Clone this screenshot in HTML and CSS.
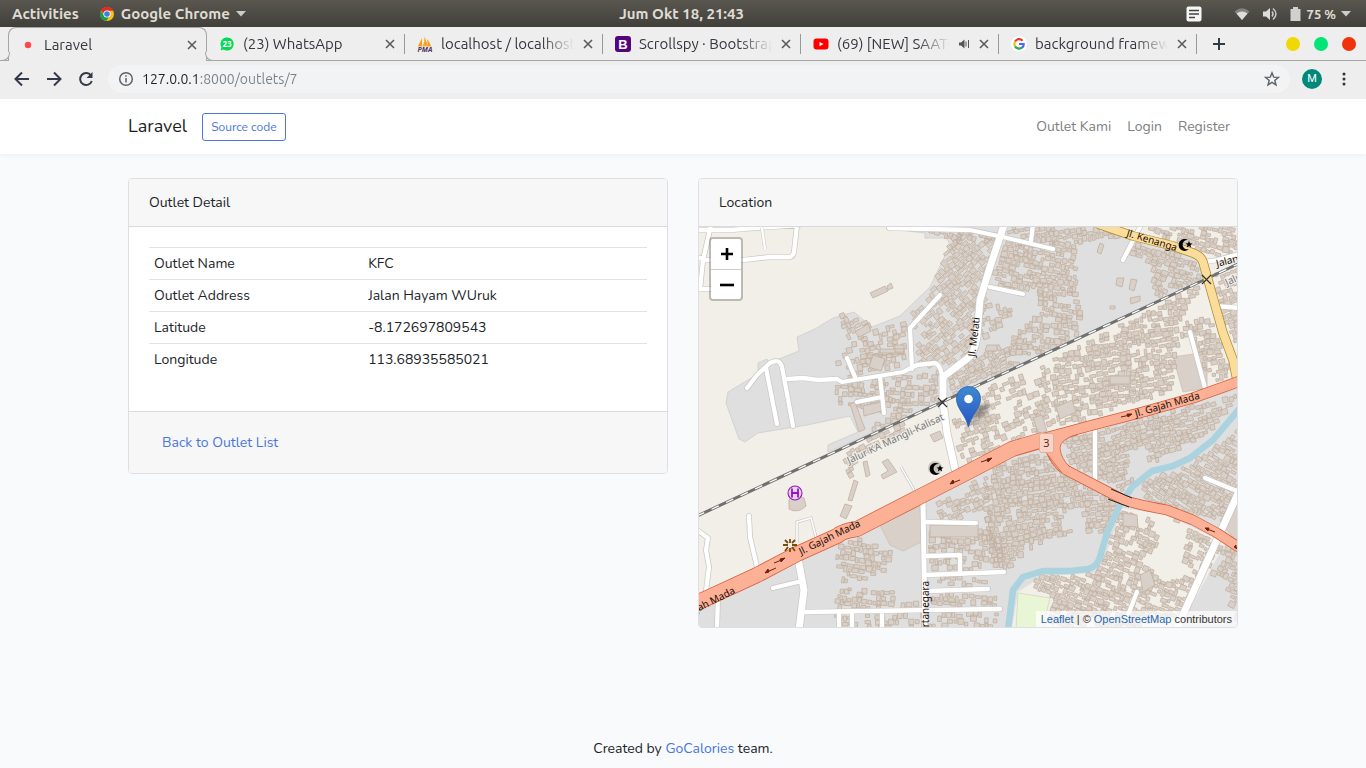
FILE: index.html
```html
<!DOCTYPE html>
<html lang="id">
<head>
<meta charset="utf-8">
<title>Laravel</title>
<meta name="viewport" content="width=device-width, initial-scale=1">
<link rel="stylesheet" href="styles.css">
</head>
<body>
<header class="topbar">
  <div class="topbar-side">
    <button class="top-item">Activities</button>
    <button class="top-item">
      <svg width="16" height="16" viewBox="0 0 16 16"><circle cx="8" cy="8" r="7" fill="#fbc116"/><path d="M8 8 2 4.400A7 7 0 0 1 14.100 4.500H8Z" fill="#de2c20"/><path d="M1.900 4.500A7 7 0 0 0 7.300 15L10.500 10 8 8 5 9.500Z" fill="#1a9b52"/><path d="M1.900 4.500A7 7 0 0 1 14.100 4.500H8L5 8Z" fill="#de2c20"/><circle cx="8" cy="8" r="3.600" fill="#fff"/><circle cx="8" cy="8" r="2.800" fill="#3d7eea"/></svg>
      Google Chrome
      <svg width="10" height="6" viewBox="0 0 10 6"><path d="M0 0h10L5 5.500z" fill="#ccc"/></svg>
    </button>
  </div>
  <button class="top-item">Jum Okt 18, 21:43</button>
  <div class="topbar-side topbar-end">
    <svg width="16" height="16" viewBox="0 0 16 16"><rect x=".5" y=".5" width="15" height="15" rx="2" fill="#f6f6f6"/><path d="M3 4.500h10M3 8h10M3 11.500h6" stroke="#45443f" stroke-width="1.500"/></svg>
    <svg class="wifi" width="16" height="14" viewBox="0 0 16 14"><path d="M8 13 .5 4.500Q8-2 15.500 4.500Z" fill="#85837e"/><path d="M8 13 2.500 6.600Q8 2.500 13.500 6.600Z" fill="#ddd"/></svg>
    <svg width="16" height="16" viewBox="0 0 16 16"><path d="M1 5.500h3L8 2v12l-4-3.500H1z" fill="#ddd"/><path d="M10 5.500q2 2.500 0 5M11 2.500q6 5.500 0 11" fill="none" stroke="#ccc" stroke-width="1.500"/></svg>
    <svg class="battery" width="11" height="16" viewBox="0 0 11 16"><path d="M3 1h5v2h2.500v12H.5V3H3z" fill="#d0d0ce"/></svg>
    <button class="top-item power">75 % <svg width="10" height="6" viewBox="0 0 10 6"><path d="M0 0h10L5 5.500z" fill="#ccc"/></svg></button>
  </div>
</header>

<nav class="tabs" aria-label="Tabs">
  <div class="tab tab-active">
    <svg width="16" height="16" viewBox="0 0 16 16"><circle cx="8" cy="8" r="3.200" fill="#ff4747"/></svg>
    <span class="tab-title">Laravel</span>
    <button class="tab-close" aria-label="Close"><svg width="10" height="10" viewBox="0 0 10 10"><path d="m1 1 8 8M9 1 1 9"/></svg></button>
  </div>
  <div class="tab">
    <svg width="16" height="16" viewBox="0 0 16 16"><path d="M8 1a7 7 0 1 1-3.500 13L1 15l1-3.500A7 7 0 0 1 8 1Z" fill="#06d755" stroke="#fff" stroke-width=".7"/><text x="8" y="11" text-anchor="middle" class="badge">23</text></svg>
    <span class="tab-title">(23) WhatsApp</span>
    <button class="tab-close" aria-label="Close"><svg width="10" height="10" viewBox="0 0 10 10"><path d="m1 1 8 8M9 1 1 9"/></svg></button>
  </div>
  <div class="tab">
    <svg width="16" height="16" viewBox="0 0 16 16"><path d="M1 10 5 2v8zM5.500 10.500Q8 6 7.500.5L11 10zM10 3q3 3 4 7h-3z" fill="#f8a01c"/><path d="M1 11q7-2 14 0" stroke="#fac772" fill="none"/><text x="8" y="16" text-anchor="middle" class="pma">PMA</text></svg>
    <span class="tab-title">localhost / localhost</span>
    <button class="tab-close" aria-label="Close"><svg width="10" height="10" viewBox="0 0 10 10"><path d="m1 1 8 8M9 1 1 9"/></svg></button>
  </div>
  <div class="tab">
    <svg width="16" height="16" viewBox="0 0 16 16"><rect width="16" height="16" rx="3" fill="#54057e"/><text x="8" y="12.500" text-anchor="middle" class="boot">B</text></svg>
    <span class="tab-title">Scrollspy · Bootstrap</span>
    <button class="tab-close" aria-label="Close"><svg width="10" height="10" viewBox="0 0 10 10"><path d="m1 1 8 8M9 1 1 9"/></svg></button>
  </div>
  <div class="tab">
    <svg width="16" height="16" viewBox="0 0 16 16"><rect x=".5" y="2.500" width="15" height="11" rx="3" fill="#f00"/><path d="m6.500 6 4 2-4 2.200z" fill="#fff"/></svg>
    <span class="tab-title">(69) [NEW] SAAT-</span>
    <svg width="12" height="12" viewBox="0 0 12 12"><path d="M1 4.500h2L6.500 1.500v9L3 7.500H1z" fill="#555"/><path d="M8 3.500v5M10.500 2v8" stroke="#555" fill="none"/></svg>
    <button class="tab-close" aria-label="Close"><svg width="10" height="10" viewBox="0 0 10 10"><path d="m1 1 8 8M9 1 1 9"/></svg></button>
  </div>
  <div class="tab">
    <svg width="16" height="16" viewBox="0 0 16 16"><circle cx="8" cy="8" r="8" fill="#fff"/><g fill="none" stroke-width="2.200"><path d="M4 5.500A4.700 4.700 0 0 1 11.500 4.700" stroke="#e33b2e"/><path d="M4 5.500Q2.700 8 4 10.500" stroke="#f9bb0a"/><path d="M4 10.500Q7 14 11 11.500" stroke="#2da94f"/><path d="M8 8h4.700Q12.800 10.500 11 11.700" stroke="#4a6cf0"/></g></svg>
    <span class="tab-title">background framew</span>
    <button class="tab-close" aria-label="Close"><svg width="10" height="10" viewBox="0 0 10 10"><path d="m1 1 8 8M9 1 1 9"/></svg></button>
  </div>
  <button class="new-tab" aria-label="New tab"><svg width="12" height="12" viewBox="0 0 12 12"><path d="M6 0v12M0 6h12" stroke="#333a48" stroke-width="2"/></svg></button>
  <div class="window-buttons">
    <button class="dot dot-min" aria-label="Minimize"></button>
    <button class="dot dot-max" aria-label="Maximize"></button>
    <button class="dot dot-close" aria-label="Close window"></button>
  </div>
</nav>

<div class="toolbar">
  <button class="tool" aria-label="Back"><svg width="16" height="16" viewBox="0 0 16 16"><path d="M15 8H2M8 1.500 1.500 8 8 14.500"/></svg></button>
  <button class="tool" aria-label="Forward"><svg width="16" height="16" viewBox="0 0 16 16"><path d="M1 8h13M8 1.500 14.500 8 8 14.500"/></svg></button>
  <button class="tool" aria-label="Reload"><svg width="16" height="16" viewBox="0 0 16 16"><path d="M13 4.500A6 6 0 1 0 13.800 10"/><path d="M14.500 1v6h-6z" fill="#333a48" stroke="none"/></svg></button>
  <div class="omnibox">
    <svg width="16" height="16" viewBox="0 0 16 16" fill="none" stroke="#5f6368" stroke-width="1.500"><circle cx="8" cy="8" r="6.300"/><path d="M8 7v4.500M8 4.200v1.600"/></svg>
    <input class="url" type="text" value="127.0.0.1:8000/outlets/7" aria-label="Address">
    <button class="star" aria-label="Bookmark"><svg width="16" height="16" viewBox="0 0 16 16"><path d="m8 1.800 1.700 4.300 4.700.3-3.600 3 1.200 4.500L8 11.400 4 13.900l1.200-4.500-3.600-3 4.700-.3z" fill="none" stroke="#5f6368" stroke-width="1.400"/></svg></button>
  </div>
  <button class="avatar" aria-label="Profile">M</button>
  <button class="more" aria-label="Menu"><svg width="4" height="14" viewBox="0 0 4 14" fill="#333"><circle cx="2" cy="2" r="1.500"/><circle cx="2" cy="7" r="1.500"/><circle cx="2" cy="12" r="1.500"/></svg></button>
</div>

<div class="page">
  <nav class="navbar">
    <div class="container navbar-row">
      <a class="brand" href="#">Laravel</a>
      <a class="source" href="#">Source code</a>
      <div class="nav-links">
        <a href="#">Outlet Kami</a>
        <a href="#">Login</a>
        <a href="#">Register</a>
      </div>
    </div>
  </nav>

  <main class="container cards">
    <section class="card">
      <h2 class="card-header">Outlet Detail</h2>
      <div class="card-body">
        <table class="details">
          <tbody>
            <tr><th scope="row">Outlet Name</th><td>KFC</td></tr>
            <tr><th scope="row">Outlet Address</th><td>Jalan Hayam WUruk</td></tr>
            <tr><th scope="row">Latitude</th><td>-8.172697809543</td></tr>
            <tr><th scope="row">Longitude</th><td>113.68935585021</td></tr>
          </tbody>
        </table>
      </div>
      <div class="card-footer"><a href="#">Back to Outlet List</a></div>
    </section>

    <section class="card">
      <h2 class="card-header">Location</h2>
      <div class="map">
        <svg class="map-canvas" viewBox="699 227 538 400" preserveAspectRatio="xMidYMid slice" role="img" aria-label="Map">
          <rect x="600" y="200" width="740" height="460" fill="#f2efe9"/>
          <g fill="#dfdfdf" stroke="#cfcdca" stroke-width=".8">
            <path d="M728 392 758 374V363L767 359 769 363 799 351 797 337 815 329 833 318 854 312 872 327 900 316 930 287 950 245 947 238H925V233L890 229V220H1100L1197 255 1206 279 942 402 828 452V445L858 432 850 416 807 425 758 433 745 442 739 439 726 403Z"/>
            <path d="M690 612 797 560 923 503 1010 456 1049 445 1240 388V640H690Z"/>
          </g>
          <path d="M1122 508 1167 515 1225 543 1180 627H1012L1018 592 1042 576 1094 573 1106 555ZM1000 627" fill="#f2efe9"/>
          <path d="M1018 593 1050 598 1042 630H1016Z" fill="#e9f6d5" stroke="#d5dfc4"/>
          <path d="M880 525 920 506 921 542 903 551 890 545ZM1173 357 1207 352 1207 388 1183 392ZM1225 527 1240 496V546Z" fill="#d9d0c9" stroke="#cdbfae" stroke-width=".8"/>
          <path id="buildings" class="buildings"/>
          <path class="buildings" d="m870 293 15-7 3 5-15 7zM887 286l4-3 2 5-5 2zM789 500q1-4 4-2 8-2 11 0l2 8q-8 8-17 3zM855 332l13-8 3 7-12 6zM873 355l12 4-4 12-12-4zM866 355l38-1M880 349h24v4h-24zM850 404l5-2 10 27-6 3zM863 406l18-4 1 9-18 5zM882 462l6-3 9 13-14 7-2-4 7-4zM863 462l4-1 3 14-4 2zM854 480l4 2-6 19-4-1zM845 504l7 2-6 13-6-3zM930 525h48v12h-48zM895 345h9v7h-9zM1117 278h7l-2 9-6-2zM1131 279l6 1-3 11-5-2zM1130 298l10-2v5l-9 3zM1097 252l3-9 4 2-3 9zM1110 306h5v3h-5zM930 435l10-4 3 7-9 4zM1056 407l16-7 4 12-16 7zM1123 513l14 2 1 12-15-1zM1140 575l10-5 5 15-12 7zM1110 376h20v8h-20zM1033 418l9-3 5 16-8 3zM987 345h10v6h-12z"/>
          <path d="M1240 408 1213 440 1190 458 1173 466 1152 471 1132 487 1120 505 1107 533 1100 557Q1097 567 1088 569L1070 571 1043 571 1023 577 1013 590 1008 630" fill="none" stroke="#aad3df" stroke-width="6.500" stroke-linejoin="round"/>
          <g id="local-casing" class="local casing"></g>
          <g id="local-roads" class="local">
            <g stroke-width="4.300">
              <path d="M697 230 730 230 770 227 799 225M711 225 703 260 700 289M697 257 705 260 743 260 770 257H789Q793 257 794 252L797 225M697 289H715"/>
              <path d="M889 228 970 230 1003 237 1053 249M1033 225 1031 241M990 287 1023 294M1141 225 1123 260M940 295 910 328 912 369"/>
              <path d="M747 388 757 375 770 363Q780 358 782 367L793 426M766 368 777 424M787 379 803 378 818 380 837 379 842 382 903 372 917 365 935 363Q942 366 942 380M847 358 855 377M880 377 884 413M857 402 882 397"/>
              <path d="M1190 332 1205 388M1204 262 1217 260 1240 254M1216 306 1240 308M749 516 750 537 757 567M697 530 708 538 706 550 709 567 706 591M718 596 717 630M773 588 802 581"/>
              <path d="M925 522 976 523M927 556 960 555V572M925 575 1004 572M927 591 988 589M803 612 1000 609M839 613V630M852 613V630M882 613V630M1095 428V484M1205 478 1237 491M1137 592 1126 620"/>
            </g>
            <path d="M923 501 925 630" stroke-width="5"/>
            <path d="M1004 225 990 267 980 300 977 337Q974 354 968 358L943 377V402L947 433 955 469M798 558 804 590 799 630M1240 489 1176 630" stroke-width="7"/>
          </g>
          <path d="M762 228 765 249" stroke="#ccc" stroke-width="3.600"/>
          <path d="M762 228 765 249" stroke="#fff" stroke-width="2.400"/>
          <path d="M797 543V522L811 518 816 537M901 467 914 490" fill="none" stroke="#ccc" stroke-width="3"/>
          <path d="M797 543V522L811 518 816 537M901 467 914 490" fill="none" stroke="#fff" stroke-width="1.500"/>
          <path d="M697 516 942 402 1206 279 1240 263" fill="none" stroke="#707070" stroke-width="3"/>
          <path d="M697 516 942 402 1206 279 1240 263" fill="none" stroke="#fff" stroke-width="1.300" stroke-dasharray="8 8"/>
          <g fill="none" stroke-linejoin="round">
            <path d="M1098 224 1133 236 1173 246 1193 253Q1201 256 1203 262L1210 287 1223 333 1233 360 1238 385" stroke="#aa8d2c" stroke-width="9.500"/>
            <path d="M1098 224 1133 236 1173 246 1193 253Q1201 256 1203 262L1210 287 1223 333 1233 360 1238 385" stroke="#fbdc9b" stroke-width="8"/>
            <g stroke="#d55c39">
              <path d="M690 606 757 575 797 554 837 536Q842 531 857 529L923 495 970 471 1012 449 1043 440" stroke-width="16"/>
              <path d="M1030 442 1093 425 1143 412 1193 398 1240 381" stroke-width="11"/>
              <path d="M1049 438Q1050 459 1066 470L1093 484 1120 498Q1128 503 1167 510L1193 520 1217 533 1240 548" stroke-width="10.500"/>
            </g>
            <g stroke="#fcb197">
              <path d="M690 606 757 575 797 554 837 536Q842 531 857 529L923 495 970 471 1012 449 1045 439" stroke-width="14.500"/>
              <path d="M1030 442 1093 425 1143 412 1193 398 1240 381" stroke-width="9.500"/>
              <path d="M1049 436Q1050 459 1066 470L1093 484 1120 498Q1128 503 1167 510L1193 520 1217 533 1240 548" stroke-width="9"/>
            </g>
            <path d="M1040 440 1060 432 1078 433.500Q1060 439 1060 448 1061 458 1069 467L1063 473 1043 449Z" fill="#fcb197"/>
            <path d="M1078 434.500Q1060 439 1060 448 1061 459 1070 467M1044 450 1062 473" stroke="#d55c39" stroke-width=".8"/>
            <path d="m1111 489 21 9M1108 499l21 8" stroke="#222" stroke-width="1"/>
          </g>
          <path d="m938 398 9 9m0-9-9 9M1202 275l9 9m0-9-9 9" stroke="#333" stroke-width="1.200"/>
          <g fill="#6c2210" stroke="#6c2210" stroke-width="1">
            <path d="m774 563 10-4m-3 3-1-3 5-1zM776 568l-9 4m1-3 1 3-4 1zM981 462l9-3m-2 3-1-3 5-1zM960 480l-8 3m1-3 1 3-4 1zM1121 417l9-2m-2 2-1-3 5 0zM1215 532l-8-3m2-1-1 3-3-3zM1237 548l-3-1 2-2v4z"/>
          </g>
          <rect x="1039.500" y="433.500" width="14" height="19" rx="2" fill="#f6d5c8" stroke="#e5ac99"/>
          <text x="1046.500" y="447" text-anchor="middle" class="shield">3</text>
          <g class="road-label">
            <text transform="translate(801 555) rotate(-26)">Jl. Gajah Mada</text>
            <text transform="translate(1136 417) rotate(-16)">Jl. Gajah Mada</text>
            <text transform="translate(692 615) rotate(-27)">ajah Mada</text>
            <text transform="translate(975 357) rotate(-83)">Jl. Melati</text>
            <text transform="translate(1126 236) rotate(17)">Jl. Kenanga</text>
            <text transform="translate(929 633) rotate(-90)">ertanegara</text>
            <text transform="translate(1217 267) rotate(-14)">Jalan</text>
            <text class="rail-label" transform="translate(849 464) rotate(-25)">Jalur KA Mangli-Kalisat</text>
            <text class="rail-label" transform="translate(1227 286) rotate(-25)">Jalur</text>
          </g>
          <circle cx="935" cy="468" r="7" fill="#c9c5bd"/>
          <g id="mosque"><path d="M940 473a6 6 0 1 1-1-9 4.700 4.700 0 1 0 1 9z"/><path d="m940 465 1 2.300 2.500.2-2 1.500.7 2.500-2.200-1.400-2.200 1.400.7-2.500-2-1.500 2.500-.2z"/></g>
          <use href="#mosque" x="249" y="-224"/>
          <g fill="none" stroke="#9a12c4"><circle cx="795" cy="493" r="7" stroke-width="1.100" fill="#e5d6e3"/><path d="M792 488.500v9M798 488.500v9M792 493h6" stroke-width="1.800"/></g>
          <path d="M790 539v4M790 548v4M783 545h5M792 545h5M785 540l3 3M795 540l-3 3M785 551l3-4M795 551l-3-4" stroke="#7a4d0a" stroke-width="1.800"/>
          <path d="M968 427 978 406Q990 400 989 410Z" fill="#333" opacity=".45" class="pin-shadow"/>
          <path d="M968.500 427C966 415 956.500 409 956.500 398.500A12 12 0 0 1 980.500 398.500C980.500 409 971 415 968.500 427Z" fill="url(#pin)" stroke="#2e6cb5"/>
          <circle cx="968.500" cy="399" r="4.300" fill="#fff"/>
          <defs><linearGradient id="pin" x2="0" y2="1"><stop stop-color="#4189d0"/><stop offset="1" stop-color="#2653c4"/></linearGradient></defs>
        </svg>
        <div class="zoom">
          <button aria-label="Zoom in"><svg width="12" height="12" viewBox="0 0 12 12"><path d="M6 0v12M0 6h12"/></svg></button>
          <button aria-label="Zoom out"><svg width="14" height="12" viewBox="0 0 14 12"><path d="M0 6h14"/></svg></button>
        </div>
        <div class="attribution"><a href="#">Leaflet</a> | © <a href="#">OpenStreetMap</a> contributors</div>
      </div>
    </section>
  </main>

  <footer class="credit">Created by <a href="#">GoCalories</a> team.</footer>
</div>
<script src="map.js"></script>
</body>
</html>
```
FILE: styles.css
```css
* { box-sizing: border-box; }

body {
  margin: 0;
  min-height: 100vh;
  display: flex;
  flex-direction: column;
  background: #f8fafc;
  color: #212529;
  font: 14px/23px Nunito, "Open Sans", sans-serif;
}

button {
  border: 0;
  padding: 0;
  background: none;
  font: inherit;
  color: inherit;
}

svg { display: block; flex: none; }
a { color: #4a76dc; text-decoration: none; }

.topbar {
  height: 27px;
  display: flex;
  align-items: center;
  justify-content: space-between;
  background: linear-gradient(#59574f, #403f3a);
  color: #dfdbd2;
  font: bold 15px/26px Ubuntu, "Noto Sans", sans-serif;
}

.topbar-side {
  flex: 1 1 0;
  display: flex;
  align-items: center;
  gap: 20px;
  padding: 0 12px;
}

.topbar-end { justify-content: flex-end; gap: 12px; padding-right: 15px; }
.top-item { display: flex; align-items: center; gap: 6px; white-space: nowrap; }
.wifi { margin-left: 20px; }
.power { font-size: 13px; margin-left: -6px; gap: 5px; }

.tabs {
  height: 34px;
  display: flex;
  align-items: center;
  padding-left: 8px;
  background: #eee;
  border-bottom: 1px solid #a5a5a5;
  font: 15px/20px Ubuntu, "Noto Sans", sans-serif;
  color: #39343d;
}

.tab {
  position: relative;
  flex: 0 1 198px;
  min-width: 0;
  height: 20px;
  display: flex;
  align-items: center;
  gap: 8px;
  padding: 0 8px 0 12px;
  border-right: 1px solid #999;
}

.tab-active {
  flex-basis: 199px;
  align-self: flex-end;
  height: 34px;
  margin-bottom: -1px;
  padding-left: 11px;
  background: #eee;
  border: 1px solid #a5a5a5;
  border-bottom: 0;
  border-radius: 8px 8px 0 0;
}

.tab-active::before,
.tab-active::after {
  content: "";
  position: absolute;
  bottom: 0;
  width: 8px;
  height: 8px;
  background: #eee;
  border: solid #a5a5a5;
}

.tab-active::before { left: -8px; border-width: 0 1px 1px 0; border-radius: 0 0 8px 0; }
.tab-active::after { right: -8px; border-width: 0 0 1px 1px; border-radius: 0 0 0 8px; }

.tab-title {
  flex: 1;
  overflow: hidden;
  white-space: nowrap;
  mask-image: linear-gradient(90deg, #000 calc(100% - 32px), transparent);
}

.tab-close { width: 12px; height: 12px; display: grid; place-items: center; }
.tab-close path { stroke: #5a5a5f; stroke-width: 1.6; }
.new-tab { margin-left: 16px; }
.window-buttons { display: flex; gap: 14px; margin-left: auto; padding-right: 10px; }
.dot { width: 14px; height: 14px; border-radius: 50%; }
.dot-min { background: #efd900; }
.dot-max { background: #00e676; }
.dot-close { background: #f0330a; }
.badge { font: bold 8px "Noto Sans", sans-serif; fill: #fff; }
.pma { font: italic bold 7px "Noto Sans", sans-serif; fill: #4b3468; }
.boot { font: bold 13px "Liberation Sans", sans-serif; fill: #fff; }

.toolbar {
  height: 38px;
  display: flex;
  align-items: center;
  gap: 16px;
  padding: 0 18px 2px 14px;
  background: #eee;
}

.tool path { fill: none; stroke: #333a48; stroke-width: 2; }
.tool path[fill] { fill: #333a48; stroke: none; }

.omnibox {
  flex: 1;
  height: 28px;
  display: flex;
  align-items: center;
  gap: 8px;
  margin-left: -2px;
  padding: 0 10px;
  border-radius: 14px;
  background: #f1f3f4;
}

.url {
  flex: 1;
  min-width: 0;
  border: 0;
  padding: 0;
  font: 14px/20px Ubuntu, "Noto Sans", sans-serif;
  color: transparent;
  background: linear-gradient(90deg, #222 57px, #7b7f86 57px);
  background-clip: text;
}

.avatar {
  width: 20px;
  height: 20px;
  margin-left: -4px;
  border-radius: 50%;
  background: #00897b;
  color: #fff;
  font: 11px/20px Roboto, sans-serif;
}

.more { margin-right: 2px; margin-left: 4px; }

.page { flex: 1; display: flex; flex-direction: column; }

.container {
  width: 100%;
  max-width: 1140px;
  margin: 0 auto;
  padding: 0 15px;
}

.navbar { background: #fff; box-shadow: 0 2px 4px rgba(0, 0, 0, .04); }
.navbar-row { min-height: 55px; display: flex; align-items: center; gap: 15px; }
.brand { font-size: 18px; color: #1f1f1f; }

.source {
  padding: 4px 8px;
  border: 1px solid #4a76dc;
  border-radius: 3px;
  font-size: 12px;
  line-height: 18px;
}

.nav-links { margin-left: auto; display: flex; gap: 16px; padding-right: 8px; }
.nav-links a { color: #808080; }

.cards {
  display: grid;
  grid-template-columns: repeat(2, minmax(0, 1fr));
  align-items: start;
  gap: 30px;
  padding-top: 24px;
}

.card {
  overflow: hidden;
  border: 1px solid #dedfe0;
  border-radius: 4px;
  background: #fff;
}

.card-header {
  margin: 0;
  padding: 12px 20px;
  border-bottom: 1px solid #dadada;
  background: #f7f7f7;
  font: inherit;
}

.card-body { padding: 20px 20px 36px; }
.details { width: 100%; border-collapse: collapse; table-layout: fixed; }
.details th { width: 43%; font-weight: normal; text-align: left; }
.details th, .details td { padding: 4px 5px; border-top: 1px solid #dee2e6; }
.card-footer { padding: 19px 33px; border-top: 1px solid #dadada; background: #f7f7f7; }

.map { position: relative; height: 400px; }
.map-canvas { width: 100%; height: 100%; }
.buildings { fill: #d9d0c9; stroke: #c0b09f; stroke-width: .8; }
.local { fill: none; stroke: #fff; stroke-linecap: round; stroke-linejoin: round; }
.road-label { font: 10px "Noto Sans", sans-serif; fill: #1c1008; }
.rail-label { fill: #777; stroke: #f2efe9; stroke-width: 2px; paint-order: stroke; }
.shield { font: 11px "Noto Sans", sans-serif; fill: #78200c; }
.pin-shadow { filter: blur(2px); }

.zoom {
  position: absolute;
  left: 10px;
  top: 10px;
  width: 34px;
  border: 2px solid rgba(0, 0, 0, .22);
  border-radius: 4px;
  background: #fff;
  background-clip: padding-box;
}

.zoom button { width: 30px; height: 30px; display: grid; place-items: center; padding-left: 2px; }
.zoom button + button { border-top: 1px solid #ccc; }
.zoom path { stroke: #000; stroke-width: 2.6; }

.attribution {
  position: absolute;
  right: 0;
  bottom: 0;
  padding: 0 5px;
  background: rgba(255, 255, 255, .7);
  color: #333;
  font: 11px/16px "Liberation Sans", sans-serif;
}

.attribution a { color: #1e69ae; }
.credit { margin-top: auto; padding: 8px 0; text-align: center; }
```
FILE: map.js
```js
// Fills residential blocks with small building footprints and adds road casings.
(function () {
  var seed = 71;
  function rand() {
    seed = (seed * 16807) % 2147483647;
    return seed / 2147483647;
  }
  function inside(x, y, p) {
    var hit = false;
    for (var i = 0, j = p.length - 2; i < p.length; j = i, i += 2) {
      if ((p[i + 1] > y) !== (p[j + 1] > y) &&
          x < (p[j] - p[i]) * (y - p[i + 1]) / (p[j + 1] - p[i + 1]) + p[i]) hit = !hit;
    }
    return hit;
  }
  // [angle, density, x, y, x, y, ...]
  var zones = [
    [-40, .8, 952,234, 1000,234, 985,300, 972,355, 945,368, 914,366, 914,328, 905,322, 932,292],
    [-10, .65, 836,365, 846,350, 870,333, 905,322, 908,368, 850,378],
    [-25, .8, 837,315, 850,314, 870,326, 860,338, 848,337],
    [3, .75, 835,385, 905,375, 938,372, 938,400, 880,430, 862,437, 884,414, 835,404],
    [12, .9, 1006,241, 1076,243, 1078,290, 1000,292, 993,275],
    [5, .8, 1040,290, 1078,290, 1084,333, 1010,369, 1010,340, 1040,312],
    [-25, .9, 1010,340, 1010,369, 955,394, 948,376, 972,362],
    [-15, .7, 978,300, 984,300, 1010,310, 1012,315, 990,335, 980,340],
    [15, .9, 925,230, 975,230, 1000,236, 1000,242, 950,242],
    [-10, .9, 1000,227, 1108,227, 1120,238, 1095,240, 1055,245, 1010,234],
    [18, .9, 1130,243, 1195,258, 1200,280, 1155,298, 1150,262, 1128,252],
    [15, .9, 1143,227, 1238,227, 1238,256, 1208,256, 1180,243],
    [-20, .8, 1212,275, 1238,268, 1238,345, 1225,320],
    [-8, .88, 1198,286, 1230,375, 1208,384, 1190,332, 1178,352, 1172,390, 1060,428, 1050,400, 1052,360],
    [-18, .65, 1052,360, 1050,400, 1060,424, 1010,444, 960,464, 953,420, 990,388],
    [-25, .8, 848,450, 905,422, 915,426, 858,458, 850,478, 842,454],
    [-8, .9, 1045,450, 1063,472, 1118,502, 1105,540, 1093,530, 1060,535, 1020,555, 1010,570, 990,548, 985,500, 995,464],
    [-22, .75, 938,504, 990,474, 990,520, 940,520],
    [0, .7, 930,530, 1000,530, 1008,568, 930,571],
    [-15, .95, 1063,440, 1238,394, 1212,432, 1150,464, 1122,490, 1065,460],
    [28, .95, 1145,480, 1190,466, 1238,428, 1238,486, 1225,525, 1190,515, 1142,500],
    [20, .88, 1120,510, 1150,516, 1160,545, 1140,560, 1165,582, 1200,575, 1182,615, 1135,627, 1050,627, 1052,595, 1025,589, 1035,577, 1097,573],
    [22, .85, 1168,516, 1222,544, 1200,582, 1185,560, 1186,530],
    [22, .7, 1226,545, 1238,550, 1238,620, 1222,580, 1212,575],
    [5, .8, 836,547, 855,538, 880,545, 895,552, 885,570, 860,582, 836,585],
    [4, .85, 836,587, 895,592, 898,608, 836,610],
    [2, .85, 900,602, 920,602, 920,609, 900,609],
    [2, .7, 832,615, 998,613, 998,627, 832,627],
    [2, .75, 930,577, 985,577, 985,586, 930,586],
    [2, .75, 930,594, 998,594, 998,606, 930,606]
  ];
  var holes = [
    [1132,450, 1150,448, 1145,472, 1126,480],
    [1065,508, 1085,506, 1082,532, 1062,528],
    [1018,360, 1034,352, 1042,376, 1026,388],
    [1000,400, 1015,398, 1014,420, 1002,422],
    [1183,302, 1206,298, 1210,316, 1188,324]
  ];
  var out = "";
  zones.forEach(function (z) {
    var base = z[0] * Math.PI / 180, bc = Math.cos(base), bs = Math.sin(base), p = z.slice(2);
    for (var v = -340; v < 340; v += 5.4) {
      for (var u = -430; u < 430;) {
        var w = 2.4 + rand() * 4, h = 2.6 + rand() * 3.6, keep = rand() < z[1];
        var a = base + (rand() - .5) * .16, c = Math.cos(a), s = Math.sin(a);
        var mu = u + w / 2, mv = v + rand() * 2.8 + Math.sin(u / 17) * 2;
        u += w + .5 + rand();
        var x = 968 + mu * bc - mv * bs, y = 427 + mu * bs + mv * bc;
        if (!keep || !inside(x, y, p)) continue;
        if (holes.some(function (q) { return inside(x, y, q); })) continue;
        var wx = w / 2 * c, wy = w / 2 * s, hx = -h / 2 * s, hy = h / 2 * c;
        out += "M" + [x - wx - hx, y - wy - hy, x + wx - hx, y + wy - hy,
          x + wx + hx, y + wy + hy, x - wx + hx, y - wy + hy]
          .map(function (n) { return n.toFixed(1); }).join(" ") + "Z";
      }
    }
  });
  document.getElementById("buildings").setAttribute("d", out);

  var casing = document.getElementById("local-casing");
  casing.innerHTML = document.getElementById("local-roads").innerHTML;
  casing.style.stroke = "#c8c6c2";
  casing.querySelectorAll("[stroke-width]").forEach(function (el) {
    el.setAttribute("stroke-width", Number(el.getAttribute("stroke-width")) + 1.4);
  });
})();
```
